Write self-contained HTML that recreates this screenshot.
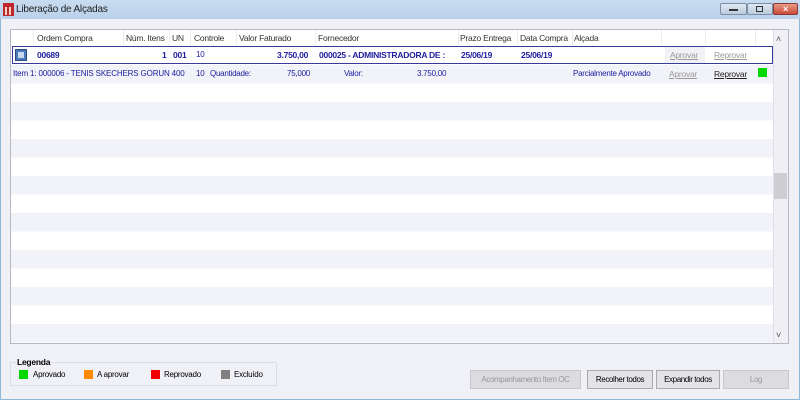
<!DOCTYPE html><html><head><style>
*{margin:0;padding:0;box-sizing:border-box}
body{width:800px;height:400px;overflow:hidden;background:#f0f0f7;font-family:"Liberation Sans",sans-serif;font-size:8.5px;letter-spacing:-0.25px;position:relative;color:#000}
.a{position:absolute;white-space:nowrap}
.win{position:absolute;left:0;top:0;width:800px;height:400px;border:1px solid #8fb8d8;border-top:none}
.tb{position:absolute;left:0;top:0;width:800px;height:19px;background:linear-gradient(#c8dcf0,#b9d1ea)}
.grid{position:absolute;left:10px;top:29px;width:779px;height:315px;background:#fff;border:1px solid #b8b8c0;overflow:hidden}
.hd{color:#333;font-size:8.5px}
.b{color:#2020a0;font-weight:bold;font-size:8.5px}
.n{color:#2020a0;font-size:8px}
.btn{position:absolute;top:370px;height:19px;border:1px solid #aaa;background:#e4e4e8;font-size:8px;text-align:center;line-height:17px;letter-spacing:-.4px}
</style></head><body>
<div class="win"></div>
<div class="tb"></div>
<div class="a" style="left:3px;top:3px;width:11px;height:13px;background:#c0262b"></div>
<div class="a" style="left:5px;top:7px;width:2px;height:8px;background:#f3d0c0"></div>
<div class="a" style="left:9px;top:7px;width:2px;height:8px;background:#f3d0c0"></div>
<div class="a" style="left:16px;top:4px;font-size:10px;color:#222;letter-spacing:-0.2px">Liberação de Alçadas</div>
<div class="a" style="left:720px;top:3px;width:27px;height:12px;border:1px solid #7a8ea8;border-radius:2px;background:linear-gradient(#dfe8f3,#bccbdd)"></div>
<div class="a" style="left:729px;top:9px;width:9px;height:2px;background:#333"></div>
<div class="a" style="left:747px;top:3px;width:26px;height:12px;border:1px solid #7a8ea8;border-radius:2px;background:linear-gradient(#dfe8f3,#bccbdd)"></div>
<div class="a" style="left:756px;top:6px;width:7px;height:6px;border:1px solid #333"></div>
<div class="a" style="left:773px;top:3px;width:25px;height:12px;border:1px solid #8a3a30;border-radius:2px;background:linear-gradient(#e89a88,#c94a36);color:#fff;font-size:9px;text-align:center;line-height:10px;font-weight:bold">×</div>

<div class="grid">
<div class="a" style="left:0;top:35px;width:762px;height:278px;background:repeating-linear-gradient(#f2f3f8 0 18.5px,#fff 18.5px 37px)"></div>
<div class="a" style="left:762px;top:0;width:16px;height:315px;background:#f0f0f4;border-left:1px solid #e0e0e8"></div>
<div class="a" style="left:763px;top:143px;width:13px;height:26px;background:#cdcdd2"></div>
<div class="a" style="left:765px;top:4px;color:#555;font-size:9px">˄</div>
<div class="a" style="left:765px;top:300px;color:#555;font-size:9px">˅</div>
</div>
<div class="a" style="left:33px;top:30px;height:15px;border-left:1px solid #ebebf0"></div>
<div class="a" style="left:123px;top:30px;height:15px;border-left:1px solid #ebebf0"></div>
<div class="a" style="left:169px;top:30px;height:15px;border-left:1px solid #ebebf0"></div>
<div class="a" style="left:190px;top:30px;height:15px;border-left:1px solid #ebebf0"></div>
<div class="a" style="left:236px;top:30px;height:15px;border-left:1px solid #ebebf0"></div>
<div class="a" style="left:315px;top:30px;height:15px;border-left:1px solid #ebebf0"></div>
<div class="a" style="left:458px;top:30px;height:15px;border-left:1px solid #ebebf0"></div>
<div class="a" style="left:517px;top:30px;height:15px;border-left:1px solid #ebebf0"></div>
<div class="a" style="left:572px;top:30px;height:15px;border-left:1px solid #ebebf0"></div>
<div class="a" style="left:661px;top:30px;height:15px;border-left:1px solid #ebebf0"></div>
<div class="a" style="left:705px;top:30px;height:15px;border-left:1px solid #ebebf0"></div>
<div class="a" style="left:755px;top:30px;height:15px;border-left:1px solid #ebebf0"></div>
<div class="a hd" style="left:37px;top:33px">Ordem Compra</div>
<div class="a hd" style="left:126px;top:33px">Núm. Itens</div>
<div class="a hd" style="left:172px;top:33px">UN</div>
<div class="a hd" style="left:194px;top:33px">Controle</div>
<div class="a hd" style="left:239px;top:33px">Valor Faturado</div>
<div class="a hd" style="left:318px;top:33px">Fornecedor</div>
<div class="a hd" style="left:460px;top:33px">Prazo Entrega</div>
<div class="a hd" style="left:520px;top:33px">Data Compra</div>
<div class="a hd" style="left:574px;top:33px">Alçada</div>
<div class="a" style="left:12px;top:46px;width:761px;height:18px;border:1px solid #3a3a9a;background:#fff;overflow:hidden">
<div class="a" style="left:2px;top:2px;width:12px;height:12px;background:#4a7ab8;border:1px solid #2a4a80"></div>
<div class="a" style="left:5px;top:5px;width:6px;height:6px;background:#c8d8f0"></div>
<div class="a b" style="left:24px;top:3px">00689</div>
<div class="a b" style="left:149px;top:3px">1</div>
<div class="a b" style="left:160px;top:3px">001</div>
<div class="a n" style="left:183px;top:3px">10</div>
<div class="a b" style="left:264px;top:3px">3.750,00</div>
<div class="a b" style="left:306px;top:3px;width:137px;overflow:hidden">000025 - ADMINISTRADORA DE :</div>
<div class="a b" style="left:448px;top:3px">25/06/19</div>
<div class="a b" style="left:508px;top:3px">25/06/19</div>
<div class="a" style="left:652px;top:0;width:40px;height:16px;background:#f2f2f6"></div>
<div class="a" style="left:657px;top:3px;color:#999;text-decoration:underline">Aprovar</div>
<div class="a" style="left:701px;top:3px;color:#999;text-decoration:underline">Reprovar</div>
</div>
<div class="a n" style="left:13px;top:69px;letter-spacing:-0.15px">Item 1: 000006 - TENIS SKECHERS GORUN 400</div>
<div class="a n" style="left:196px;top:69px">10</div>
<div class="a n" style="left:210px;top:69px">Quantidade:</div>
<div class="a n" style="left:287px;top:69px">75,000</div>
<div class="a n" style="left:344px;top:69px">Valor:</div>
<div class="a n" style="left:417px;top:69px">3.750,00</div>
<div class="a n" style="left:573px;top:69px">Parcialmente Aprovado</div>
<div class="a" style="left:669px;top:69px;color:#999;text-decoration:underline">Aprovar</div>
<div class="a" style="left:714px;top:69px;color:#222;text-decoration:underline">Reprovar</div>
<div class="a" style="left:758px;top:68px;width:9px;height:9px;background:#00d800"></div>
<div class="a" style="left:10px;top:362px;width:267px;height:24px;border:1px solid #dcdce4"></div>
<div class="a" style="left:17px;top:357px;font-weight:bold;font-size:8.5px;background:#f0f0f7">Legenda</div>
<div class="a" style="left:19px;top:370px;width:9px;height:9px;background:#00d800"></div>
<div class="a" style="left:33px;top:370px;font-size:8px">Aprovado</div>
<div class="a" style="left:84px;top:370px;width:9px;height:9px;background:#ff8a00"></div>
<div class="a" style="left:97px;top:370px;font-size:8px">A aprovar</div>
<div class="a" style="left:151px;top:370px;width:9px;height:9px;background:#f00000"></div>
<div class="a" style="left:164px;top:370px;font-size:8px">Reprovado</div>
<div class="a" style="left:221px;top:370px;width:9px;height:9px;background:#808080"></div>
<div class="a" style="left:234px;top:370px;font-size:8px">Excluído</div>
<div class="btn" style="left:470px;width:111px;color:#999;background:#dcdce0;border-color:#c8c8cc">Acompanhamento Item OC</div>
<div class="btn" style="left:587px;width:66px">Recolher todos</div>
<div class="btn" style="left:656px;width:64px">Expandir todos</div>
<div class="btn" style="left:723px;width:66px;color:#999;background:#dcdce0;border-color:#c8c8cc">Log</div>
</body></html>
